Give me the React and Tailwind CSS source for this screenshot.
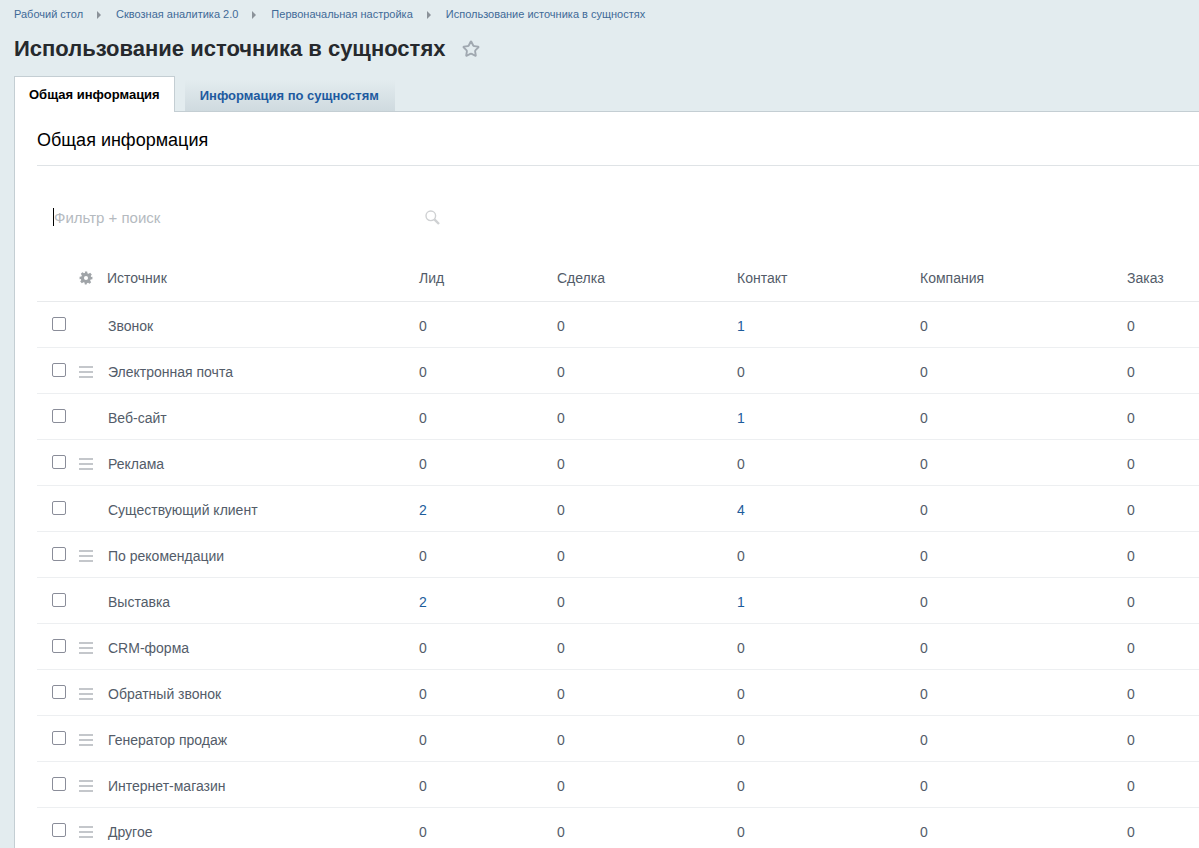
import { Star } from "lucide-react";

const crumbs = ["Рабочий стол", "Сквозная аналитика 2.0", "Первоначальная настройка", "Использование источника в сущностях"];

const rows = [
  { name: "Звонок", lid: 0, contact: 1, drag: false },
  { name: "Электронная почта", lid: 0, contact: 0, drag: true },
  { name: "Веб-сайт", lid: 0, contact: 1, drag: false },
  { name: "Реклама", lid: 0, contact: 0, drag: true },
  { name: "Существующий клиент", lid: 2, contact: 4, drag: false },
  { name: "По рекомендации", lid: 0, contact: 0, drag: true },
  { name: "Выставка", lid: 2, contact: 1, drag: false },
  { name: "CRM-форма", lid: 0, contact: 0, drag: true },
  { name: "Обратный звонок", lid: 0, contact: 0, drag: true },
  { name: "Генератор продаж", lid: 0, contact: 0, drag: true },
  { name: "Интернет-магазин", lid: 0, contact: 0, drag: true },
  { name: "Другое", lid: 0, contact: 0, drag: true },
];

const gridCols = "grid grid-cols-[15px_27px_29px_311px_138px_180px_183px_207px_1fr] items-center";

function Gear() {
  return (
    <svg viewBox="0 0 24 24" className="block w-[14px] h-[14px] fill-[#a0a4a8]">
      <path
        fillRule="evenodd"
        d="M10 1h4l.6 3.1 1.9.8 2.6-1.8 2.8 2.8-1.8 2.6.8 1.9L23 10v4l-3.1.6-.8 1.9 1.8 2.6-2.8 2.8-2.6-1.8-1.9.8L13 23h-3l-.6-3.1-1.9-.8-2.6 1.8-2.8-2.8 1.8-2.6-.8-1.9L1 14v-4l3.1-.6.8-1.9-1.8-2.6 2.8-2.8 2.6 1.8 1.9-.8L10 1zm2 7.5a3.5 3.5 0 1 0 0 7 3.5 3.5 0 0 0 0-7z"
      />
    </svg>
  );
}

function SearchGlass() {
  return (
    <svg viewBox="0 0 15 15" className="w-[15px] h-[15px] fill-none stroke-[#cfd1d3]">
      <circle cx="5.8" cy="5.8" r="4.8" strokeWidth="1.4" />
      <path d="M9.4 9.4l4.6 4.6" strokeWidth="2.4" />
    </svg>
  );
}

function Count({ value }) {
  return <span className={value > 0 ? "text-[#1d5c9b]" : "text-[#535c69]"}>{value}</span>;
}

export default function App() {
  return (
    <div className="h-[848px] overflow-hidden bg-[#e3ecef] font-['Liberation_Sans',Arial,sans-serif]">
      {/* Хлебные крошки */}
      <div className="flex items-center h-[15px] mt-[7px] pl-[14px] text-[11px] text-[#3f6a97]">
        {crumbs.map((c, i) => (
          <div key={c} className="flex items-center">
            {i > 0 && (
              <span className="ml-[14px] mr-[15px] w-0 h-0 border-y-[4px] border-y-transparent border-l-[4px] border-l-[#8b9299]" />
            )}
            <span className="whitespace-nowrap">{c}</span>
          </div>
        ))}
      </div>

      {/* Заголовок */}
      <div className="flex items-center h-[26px] mt-[14px] pl-[14px]">
        <h1 className="text-[22px] font-bold leading-[26px] text-[#26292d] whitespace-nowrap">
          Использование источника в сущностях
        </h1>
        <Star className="ml-[17px] w-[18px] h-[18px] text-[#a0a8b0]" strokeWidth={2.5} />
      </div>

      {/* Вкладки */}
      <div className="flex items-end h-[36px] mt-[13px] pl-[14px]">
        <div className="flex items-center h-[36px] px-[14px] bg-white border border-b-0 border-[#c4ced3] text-[13px] font-bold text-black -mb-px relative z-10">
          Общая информация
        </div>
        <div className="flex items-center h-[31px] ml-[10px] pl-[15px] pr-[16px] bg-gradient-to-b from-[#e3ecef] to-[#cfdadf] text-[13px] font-bold text-[#1e5aa0]">
          Информация по сущностям
        </div>
      </div>

      {/* Панель */}
      <div className="ml-[14px] bg-white border-l border-t border-[#c4ced3] pl-[22px]">
        <div className="h-[54px] pt-[4px] flex items-center border-b border-[#dfe3e6] text-[18px] text-black">
          Общая информация
        </div>

        <div className="flex items-center h-[104px] pl-[16px] pb-[2px]">
          <div className="flex items-center w-[372px] text-[15px] text-[#b5bac0] border-l border-black h-[18px] leading-[18px] pt-[1px]">
            Фильтр + поиск
          </div>
          <SearchGlass />
        </div>

        <div className={`${gridCols} h-[16px] pb-[15px] box-content text-[14px] leading-[16px] text-[#535c69] border-b border-[#e8eaec]`}>
          <span />
          <span />
          <span><Gear /></span>
          <span className="-ml-[1px]">Источник</span>
          <span>Лид</span>
          <span>Сделка</span>
          <span>Контакт</span>
          <span>Компания</span>
          <span>Заказ</span>
        </div>

        {rows.map((r) => (
          <div key={r.name} className={`${gridCols} h-[46px] pt-[3px] text-[14px] text-[#535c69] border-b border-[#edeff1]`}>
            <span />
            <span className="block w-[14px] h-[14px] -mt-[5px] rounded-[2px] border border-[#8a8d99] bg-white" />
            <span className="-mt-[1px]">
              {r.drag && (
                <span className="block w-[14px] space-y-[3px] [&>i]:block [&>i]:h-[2px] [&>i]:bg-[#c4c7cb]">
                  <i />
                  <i />
                  <i />
                </span>
              )}
            </span>
            <span>{r.name}</span>
            <Count value={r.lid} />
            <Count value={0} />
            <Count value={r.contact} />
            <Count value={0} />
            <Count value={0} />
          </div>
        ))}
      </div>
    </div>
  );
}
